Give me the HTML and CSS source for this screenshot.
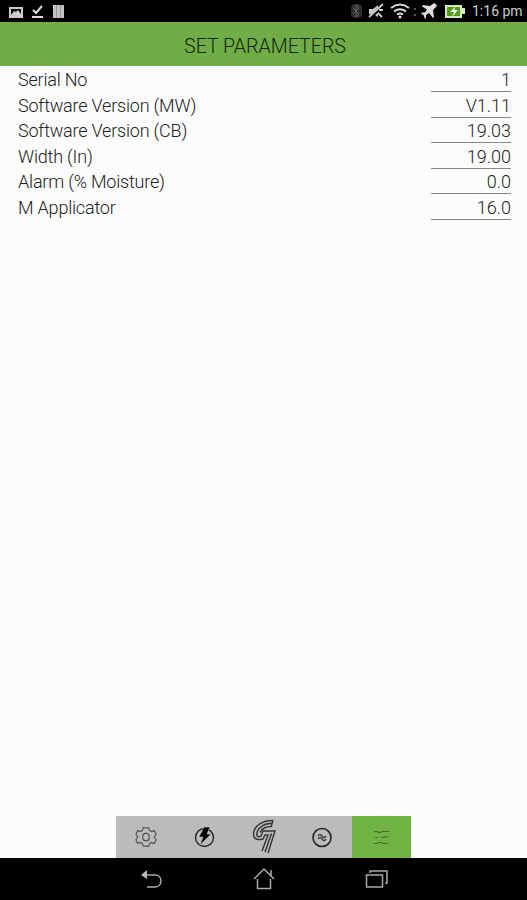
FILE: index.html
```
<!DOCTYPE html>
<html lang="en">
<head>
    <meta charset="UTF-8">
    <meta name="viewport" content="width=device-width, initial-scale=1.0">
    <title>Set Parameters</title>
    <link rel="stylesheet" href="styles.css">
</head>
<body>
    <div class="status-bar">
        <svg class="status-left" width="60" height="22" viewBox="0 0 60 22">
            <path fill="#ccc" fill-rule="evenodd" d="M0 7h14v11H0zM2 9v6l3-4 2 1 2-2 3 4V9z"/>
            <path fill="none" stroke="#ddd" stroke-width="2" d="M24 10l3 3 6-7M23 17h11"/>
            <path fill="#c4c4c4" d="M44 5h11v13H44z"/>
            <path stroke="#999" d="M47.500 5v13M51.500 5v13"/>
        </svg>
        <svg class="status-right" width="122" height="22" viewBox="0 0 122 22">
            <rect x="1" y="4" width="11" height="14" rx="4" fill="#2d2d2d"/>
            <path fill="none" stroke="#666" d="M3 8l6 6-3 3V5l3 3-6 6"/>
            <path fill="#c8c8c8" d="M19 9h4l5-4v12l-5-3h-4z"/>
            <path stroke="#000" stroke-width="3.500" d="M19 19L33 5"/>
            <path stroke="#ccc" stroke-width="1.800" d="M19 17L33 4M29 10h4M28 13l4 4"/>
            <g fill="none" stroke="#ddd" stroke-width="1.800">
                <path d="M41 8q9-7 18 0M44 11.500q6-4.500 12 0M47 14.500q3-2 6 0"/>
            </g>
            <circle cx="50" cy="17" r="1.500" fill="#ddd"/>
            <path fill="#555" d="M64 8h2v2h-2zM64 14h2v2h-2z"/>
            <path fill="#ddd" d="M86 4.500l1 1.500-4 4 1 7-1 1-4-5-3 2v3l-1 1-1.500-4L71 13.500l1-1h3l2-3-5-3 1-1.500 7 1 4-3z"/>
            <path fill="#d6e8c6" d="M95 5h17v3h3v6h-3v4H95z"/>
            <path fill="#509d16" d="M97 7h13v9H97z"/>
            <path fill="#fff" d="M106 6l-6 6h4l-2 5 6-7h-4z"/>
        </svg>
        <span class="clock">1:16 pm</span>
    </div>
    <header class="title-bar">
        <h1>SET PARAMETERS</h1>
    </header>
    <main class="params">
        <div class="row"><span class="label">Serial No</span><span class="value">1</span></div>
        <div class="row"><span class="label">Software Version (MW)</span><span class="value">V1.11</span></div>
        <div class="row"><span class="label">Software Version (CB)</span><span class="value">19.03</span></div>
        <div class="row"><span class="label">Width (In)</span><span class="value">19.00</span></div>
        <div class="row"><span class="label">Alarm (% Moisture)</span><span class="value">0.0</span></div>
        <div class="row"><span class="label">M Applicator</span><span class="value">16.0</span></div>
    </main>
    <nav class="tabs">
        <div class="tab">
            <svg width="22" height="22" viewBox="0 0 24 24" fill="none" stroke="#555" stroke-width="1.300">
                <path d="M9 2h6l1 3 2 1 3-1 2 4-2 3 2 3-2 4-3-1-2 1-1 3H9l-1-3-2-1-3 1-2-4 2-3-2-3 2-4 3 1 2-1z"/>
                <rect x="8.500" y="8" width="7" height="8" rx="3"/>
            </svg>
        </div>
        <div class="tab">
            <svg width="24" height="24" viewBox="0 0 24 24">
                <circle cx="11.500" cy="12.500" r="9" fill="none" stroke="#222" stroke-width="1.400"/>
                <path fill="#000" stroke="#bbb" stroke-width=".6" d="M11 2h6l-3 7h4L7 20l3-8H6z"/>
            </svg>
        </div>
        <div class="tab">
            <svg width="28" height="36" viewBox="0 0 28 36" fill="none" stroke="#333" stroke-width="1.400">
                <path d="M23 1.500C13 1 6 6 4 12c-2 7 2 10 9 8l2-4h3L12 32"/>
                <path d="M22 4.500C15 4 9 8 7 13c-1 4 1 6 4 4l2-5h12L18 34"/>
                <path d="M21 7.500c-5 0-9 2-11 6M21.500 14.500L15 33M23 1.500L21 8"/>
            </svg>
        </div>
        <div class="tab">
            <svg width="24" height="24" viewBox="0 0 24 24" fill="none" stroke="#222">
                <circle cx="11" cy="12.500" r="9" stroke-width="1.600"/>
                <path stroke="#444" stroke-width="1.500" d="M7 11q2-3 4 0t4 0M7 14q2-3 4 0t4 0"/>
            </svg>
        </div>
        <div class="tab active">
            <svg width="24" height="24" viewBox="0 0 24 24" fill="none" stroke="#3f6f28" stroke-width="1.200">
                <path d="M4 6.500h3l1.500 1h2l1.500-1h7M5 12.500h3M11 12.500h3l1-.5h3M4 18.500h3l1.500-1h3l1.500 1h5"/>
            </svg>
        </div>
    </nav>
    <footer class="nav-bar">
        <svg width="22" height="22" viewBox="0 0 22 22">
            <path fill="none" stroke="#aaa" stroke-width="1.500" d="M4 7h10c3 0 6 2 6 6s-3 6-6 6H6"/>
            <path fill="#bbb" d="M0 7l6-5v9z"/>
        </svg>
        <svg width="22" height="22" viewBox="0 0 22 22" fill="none" stroke="#aaa" stroke-width="1.500">
            <path d="M1 11L11 1l10 10M18 8V2M4.500 11v9.500h13V11"/>
        </svg>
        <svg width="24" height="22" viewBox="0 0 24 22" fill="none" stroke="#aaa" stroke-width="1.500">
            <path d="M1.500 7h16v12h-16zM5 5V3h17v12h-2"/>
        </svg>
    </footer>
</body>
</html>
```
FILE: styles.css
```
body {
    margin: 0;
    height: 900px;
    display: flex;
    flex-direction: column;
    background-color: #fcfcfc;
    font-family: Roboto, "Liberation Sans", sans-serif;
    color: #222;
    overflow: hidden;
}
svg {
    display: block;
}
.status-bar {
    height: 22px;
    display: flex;
    align-items: center;
    background: #000;
    padding: 0 4px 0 9px;
}
.status-right {
    margin-left: auto;
}
.clock {
    width: 51px;
    color: #ccc;
    font-size: 14px;
    line-height: 22px;
    white-space: nowrap;
}
.title-bar {
    height: 44px;
    background: #70ad47;
}
h1 {
    margin: 0;
    padding-left: 3px;
    text-align: center;
    font-size: 19.600px;
    font-weight: 300;
    line-height: 49px;
    color: #14260b;
}
.params {
    flex: 1;
    padding: 0 16px 0 18px;
}
.row {
    height: 25.600px;
    display: flex;
    justify-content: space-between;
    font-size: 18px;
    font-weight: 300;
    line-height: 27px;
}
.label {
    letter-spacing: -0.200px;
}
.value {
    box-sizing: border-box;
    width: 80px;
    height: 26px;
    border-bottom: 1px solid #888;
    text-align: right;
}
.tabs {
    width: 295px;
    height: 42px;
    margin-left: 116px;
    display: flex;
    background: #bbb;
}
.tab {
    flex: 1;
    display: flex;
    align-items: center;
    justify-content: center;
}
.active {
    background: #70b244;
}
.nav-bar {
    height: 42px;
    padding: 0 138px 0 141px;
    display: flex;
    align-items: center;
    justify-content: space-between;
    background: #000;
}
```
